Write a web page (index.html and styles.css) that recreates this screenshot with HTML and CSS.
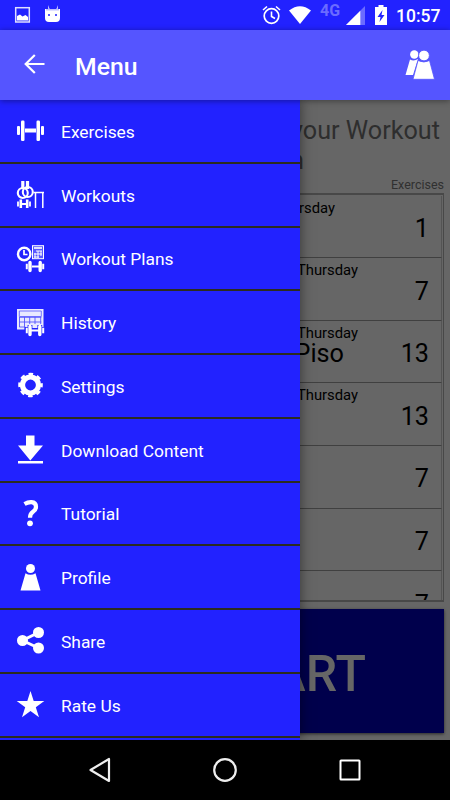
FILE: index.html
```
<!DOCTYPE html>
<html lang="en">
  <head>
    <meta charset="UTF-8" />
    <meta name="viewport" content="width=device-width, initial-scale=1.0" />
    <title>Menu</title>
    <link rel="stylesheet" href="styles.css">
  </head>
  <body>
    <div class="status-bar">
      <svg class="status-left" width="50" height="30" viewBox="0 0 50 30">
        <rect x="0.7" y="7.7" width="13.6" height="14.3" fill="none" stroke="#fff" stroke-width="1.5" opacity="0.85" />
        <path d="M2 20.500v-4.500l3-1.500 2.500 2 3-1.500 2.500 2v3.500z" fill="#fff" />
        <path d="M30 9h15v9q0 4-4 4h-7q-4 0-4-4zM33 5l2 5h-1.500zM43 5l-2 5h1.500z" fill="#fff" />
        <path d="M31 9h13v1.500H31z" fill="#bcbcff" />
        <rect x="33" y="14" width="2" height="2" fill="#5555ff" />
        <rect x="40" y="14" width="2" height="2" fill="#5555ff" />
      </svg>
      <div class="status-right">
        <svg width="19" height="20" viewBox="0 0 19 20" fill="none" stroke="#fff">
          <circle cx="9.500" cy="11" r="7.300" stroke-width="1.700" />
          <path d="M9.500 6.500v5l3.500 2M1 5l4-3.500M18 5l-4-3.500" stroke-width="1.600" />
        </svg>
        <svg class="wifi" width="22" height="18" viewBox="0 0 22 18">
          <path d="M0 4.500Q11-4 22 4.500L11 18z" fill="#fff" />
        </svg>
        <span class="network">4G</span>
        <svg class="signal" width="19" height="19" viewBox="0 0 19 19">
          <path d="M0 19L19 0v19z" fill="#6b6bff" />
          <path d="M0 19L14.300 4.700V19z" fill="#fff" />
        </svg>
        <svg class="battery" width="12" height="20" viewBox="0 0 12 20">
          <path d="M3.500 0h5v2H12v18H0V2h3.500z" fill="#fff" />
          <path d="M7.500 5L2.500 12h3l-1 5 5-7h-3z" fill="#2222ff" />
        </svg>
        <span class="clock">10:57</span>
      </div>
    </div>

    <div class="app-bar">
      <svg class="back" width="21" height="20" viewBox="0 0 21 20" fill="none" stroke="#fff" stroke-width="2.200">
        <path d="M20.500 10H2M10.800 1L1.700 10l9.100 9" />
      </svg>
      <h1 class="app-title">Menu</h1>
      <svg class="people" width="30" height="30" viewBox="0 0 30 30" fill="#fff">
        <circle cx="9.300" cy="4.500" r="4.200" />
        <path d="M5 9.500q4 2 8-.5L8 25H.500z" />
        <circle cx="19" cy="5.500" r="5.400" stroke="#5555ff" stroke-width="1" />
        <path d="M13 10.500q6 3 11.500 0L29.500 29.300H8z" stroke="#5555ff" stroke-width="0.800" />
      </svg>
    </div>

    <div class="screen">
      <div class="page">
        <h2 class="page-title">Select your Workout</h2>
        <h2 class="page-title second">Plan for this Session</h2>
        <div class="list-label">Exercises</div>
        <div class="plan-list">
          <div class="plan first"><span class="day">Thursday</span><span class="count">1</span></div>
          <div class="plan"><span class="day">Thursday</span><span class="count">7</span></div>
          <div class="plan"><span class="day">Thursday</span><span class="name">Piso</span><span class="count">13</span></div>
          <div class="plan"><span class="day">Thursday</span><span class="count">13</span></div>
          <div class="plan"><span class="count">7</span></div>
          <div class="plan"><span class="count">7</span></div>
          <div class="plan"><span class="count">7</span></div>
        </div>
        <div class="start">START</div>
      </div>

      <div class="drawer">
        <div class="menu-item">
          <svg class="icon" viewBox="0 0 27 27" fill="#fff">
            <rect x="0" y="9" width="3" height="9" rx="1" />
            <rect x="4" y="3.500" width="3.500" height="20.500" rx="1.200" />
            <rect x="8" y="11.500" width="11" height="4" />
            <rect x="19.500" y="3.500" width="3.500" height="20.500" rx="1.200" />
            <rect x="24" y="9" width="3" height="9" rx="1" />
          </svg>
          <span>Exercises</span>
        </div>
        <div class="menu-item">
          <svg class="icon" viewBox="0 0 27 27" fill="none" stroke="#fff">
            <path d="M5.800 0v8M10.500 0v8" stroke-width="3.200" />
            <circle cx="5.800" cy="12" r="5" stroke-width="2.100" />
            <circle cx="10.800" cy="11" r="5" stroke-width="2.100" />
            <path d="M3.800 18.500v8.500M10.200 18.500v8.500" stroke-width="2.600" />
            <path d="M1 20.500v5M13 20.500v5M4 23h6" stroke-width="1.800" />
            <path d="M16.500 11.500H27M18.500 11v16M25.800 11v16" stroke-width="1.500" />
          </svg>
          <span>Workouts</span>
        </div>
        <div class="menu-item">
          <svg class="icon" viewBox="0 0 27 27" fill="none" stroke="#fff">
            <circle cx="7.200" cy="9" r="6.200" stroke-width="2.400" />
            <path d="M7 5v4.500h3.500" stroke-width="1.700" />
            <rect x="15.500" y="0.700" width="11" height="13" stroke-width="1" fill="#fff" fill-opacity="0.250" />
            <path d="M17 3h8" stroke-width="1.600" />
            <path d="M19 6h6M17 9h8M17 12h5M18 8v5M21 6v7M24 6v5" stroke-width="1" />
            <path d="M13 17.500v8M23.200 17.500v8" stroke-width="3.400" stroke-linecap="round" />
            <path d="M9.800 18.800v5.500M26.200 18.800v5.500" stroke-width="2" />
            <path d="M15 21.500h7" stroke-width="2" />
          </svg>
          <span>Workout Plans</span>
        </div>
        <div class="menu-item">
          <svg class="icon" viewBox="0 0 27 27" fill="none" stroke="#fff">
            <path d="M0 0h26.500v20.500H0z" fill="#fff" fill-opacity="0.900" stroke="none" />
            <path d="M2.300 2h22v5.500h-22z" stroke="#6666ff" stroke-width="0.900" />
            <path d="M2.300 8.300h22M2.300 13h22M2.300 18h6M2.500 8v10M7.500 8v10M12.700 8v7M18 8v7M23.700 8v7" stroke="#5555ff" stroke-width="0.900" />
            <path d="M13 16v11M22.800 16v11M9.800 18v7M26.200 18v7M14 21.500h8" stroke="#2222ff" stroke-width="4.800" />
            <path d="M13 17.500v8M22.800 17.500v8" stroke-width="3.400" stroke-linecap="round" />
            <path d="M9.800 18.800v5.500M26.200 18.800v5.500" stroke-width="2" />
            <path d="M14 21.500h8" stroke-width="2" />
          </svg>
          <span>History</span>
        </div>
        <div class="menu-item">
          <svg class="icon" viewBox="0 0 27 27" fill="none" stroke="#fff">
            <circle cx="13.500" cy="13" r="8" stroke-width="5.200" />
            <circle cx="13.500" cy="13" r="11.100" stroke-width="2.400" stroke-dasharray="4.600 4.118" stroke-dashoffset="2.300" />
          </svg>
          <span>Settings</span>
        </div>
        <div class="menu-item">
          <svg class="icon" viewBox="0 0 27 27" fill="#fff">
            <path d="M9 -.5h8.500v10H26L13.300 24.500 1 9.500h8z" />
            <path d="M1 25h25v2.500H1z" />
          </svg>
          <span>Download Content</span>
        </div>
        <div class="menu-item">
          <svg class="icon" viewBox="0 0 27 27" fill="none" stroke="#fff">
            <path d="M7.500 4Q11 2 14.500 2.200q4.500 .3 4.500 4.600 0 3-3 5-3 2-3 6" stroke-width="4.200" />
            <circle cx="13" cy="23.300" r="2.900" fill="#fff" stroke="none" />
          </svg>
          <span>Tutorial</span>
        </div>
        <div class="menu-item">
          <svg class="icon" viewBox="0 0 27 27" fill="#fff">
            <circle cx="13.500" cy="4.500" r="4.500" />
            <path d="M8.500 9.200q5 3 10 0L23.500 26.500h-20z" />
          </svg>
          <span>Profile</span>
        </div>
        <div class="menu-item">
          <svg class="icon" viewBox="0 0 27 27" fill="#fff">
            <path d="M21.500 5.500L5.500 13.500l16 7.500" fill="none" stroke="#fff" stroke-width="3" />
            <circle cx="21.500" cy="5.500" r="5.500" />
            <circle cx="5.500" cy="13.500" r="5.500" />
            <circle cx="21.500" cy="21" r="5.500" />
          </svg>
          <span>Share</span>
        </div>
        <div class="menu-item">
          <svg class="icon" viewBox="0 0 27 27" fill="#fff">
            <path d="M13.500 0l3.200 10H27.300l-8.500 6.200L22 26.300l-8.500-6.200L5 26.300l3.200-10.100L-.3 10h10.600z" />
          </svg>
          <span>Rate Us</span>
        </div>
      </div>
    </div>

    <div class="nav-bar">
      <svg width="24" height="26" viewBox="0 0 24 26" fill="none" stroke="#eee" stroke-width="2.200">
        <path d="M21 2v22L2.500 13z" stroke-linejoin="round" />
      </svg>
      <svg width="26" height="26" viewBox="0 0 26 26" fill="none" stroke="#eee" stroke-width="2.200">
        <circle cx="13" cy="13" r="10.800" />
      </svg>
      <svg width="24" height="24" viewBox="0 0 24 24" fill="none" stroke="#fff" stroke-width="2">
        <rect x="2.500" y="2.500" width="19" height="19" rx="0.500" />
      </svg>
    </div>
  </body>
</html>
```
FILE: styles.css
```
body {
  margin: 0;
  width: 450px;
  height: 800px;
  display: flex;
  flex-direction: column;
  overflow: hidden;
  background: #000;
  font-family: Roboto, sans-serif;
}

svg {
  display: block;
  flex-shrink: 0;
  overflow: visible;
}

.status-bar {
  height: 30px;
  flex-shrink: 0;
  display: flex;
  justify-content: space-between;
  background: #2222ff;
  padding: 0 10px 0 15px;
  color: #fff;
}

.status-right {
  display: flex;
  align-items: center;
}

.wifi {
  margin-left: 8px;
}

.network {
  margin: -8px 0 0 9px;
  width: 22px;
  font-size: 16px;
  font-weight: 700;
  line-height: 20px;
  color: #6b6bff;
}

.signal {
  margin: 1px 0 0 4px;
}

.battery {
  margin-left: 10px;
}

.clock {
  margin: 2px 0 0 9px;
  width: 44px;
  font-size: 17.5px;
  font-weight: 500;
  white-space: nowrap;
}

.app-bar {
  height: 70px;
  flex-shrink: 0;
  box-sizing: border-box;
  display: flex;
  align-items: center;
  padding: 0 15px 0 24px;
  background: #5555ff;
  box-shadow: 0 1px 6px rgba(0, 0, 0, 0.4);
  position: relative;
  z-index: 2;
}

.back {
  margin-top: -2px;
}

.app-title {
  margin: 2px 0 0 30px;
  font-size: 24.8px;
  font-weight: 500;
  color: #fff;
}

.people {
  margin-left: auto;
}

.screen {
  height: 640px;
  flex-shrink: 0;
  position: relative;
  overflow: hidden;
}

.page {
  height: 640px;
  box-sizing: border-box;
  padding: 16px 6px 0;
  background: #666;
  text-align: right;
}

.page-title {
  margin: 0;
  padding-right: 4px;
  font-size: 25.2px;
  font-weight: 400;
  line-height: 30px;
  color: #2e2e2e;
  white-space: nowrap;
}

.page-title.second {
  padding-right: 140px;
}

.list-label {
  height: 17px;
  font-size: 12.5px;
  line-height: 18px;
  color: #303030;
}

.plan-list {
  height: 409px;
  box-sizing: border-box;
  border: 1px solid #484848;
  border-width: 2px 1px;
  padding: 0.6px 1px 0 0;
  overflow: hidden;
}

.plan {
  height: 62.6px;
  box-sizing: border-box;
  position: relative;
  border-right: 1px solid #545454;
  border-bottom: 1px solid #404040;
  color: #000;
}

.day {
  position: absolute;
  right: 83px;
  top: 3px;
  font-size: 14.8px;
  line-height: 19px;
}

.first .day {
  right: 106px;
}

.name {
  position: absolute;
  right: 97px;
  top: 18px;
  font-size: 25.2px;
  line-height: 30px;
}

.count {
  position: absolute;
  right: 12px;
  top: 17.5px;
  font-size: 25.2px;
  line-height: 32px;
}

.start {
  height: 124px;
  margin-top: 7px;
  padding-right: 78px;
  background: #00004c;
  box-shadow: 0 1px 3px rgba(0, 0, 0, 0.6);
  color: #666;
  font-size: 50px;
  font-weight: 500;
  line-height: 130px;
}

.drawer {
  position: absolute;
  top: 0;
  left: 0;
  width: 300px;
  height: 640px;
  overflow: hidden;
  background: #2222ff;
  box-shadow: 0 0 12px rgba(0, 0, 0, 0.5);
}

.menu-item {
  height: 63.75px;
  box-sizing: border-box;
  display: flex;
  align-items: center;
  gap: 17px;
  padding-left: 17px;
  border-bottom: 2px solid #2c2c20;
  color: #fff;
  font-size: 17.4px;
}

.icon {
  width: 27px;
  height: 27px;
}

.menu-item span {
  padding-top: 2px;
}

.nav-bar {
  height: 60px;
  flex-shrink: 0;
  display: flex;
  align-items: center;
  justify-content: space-between;
  padding: 0 88px;
}
```
